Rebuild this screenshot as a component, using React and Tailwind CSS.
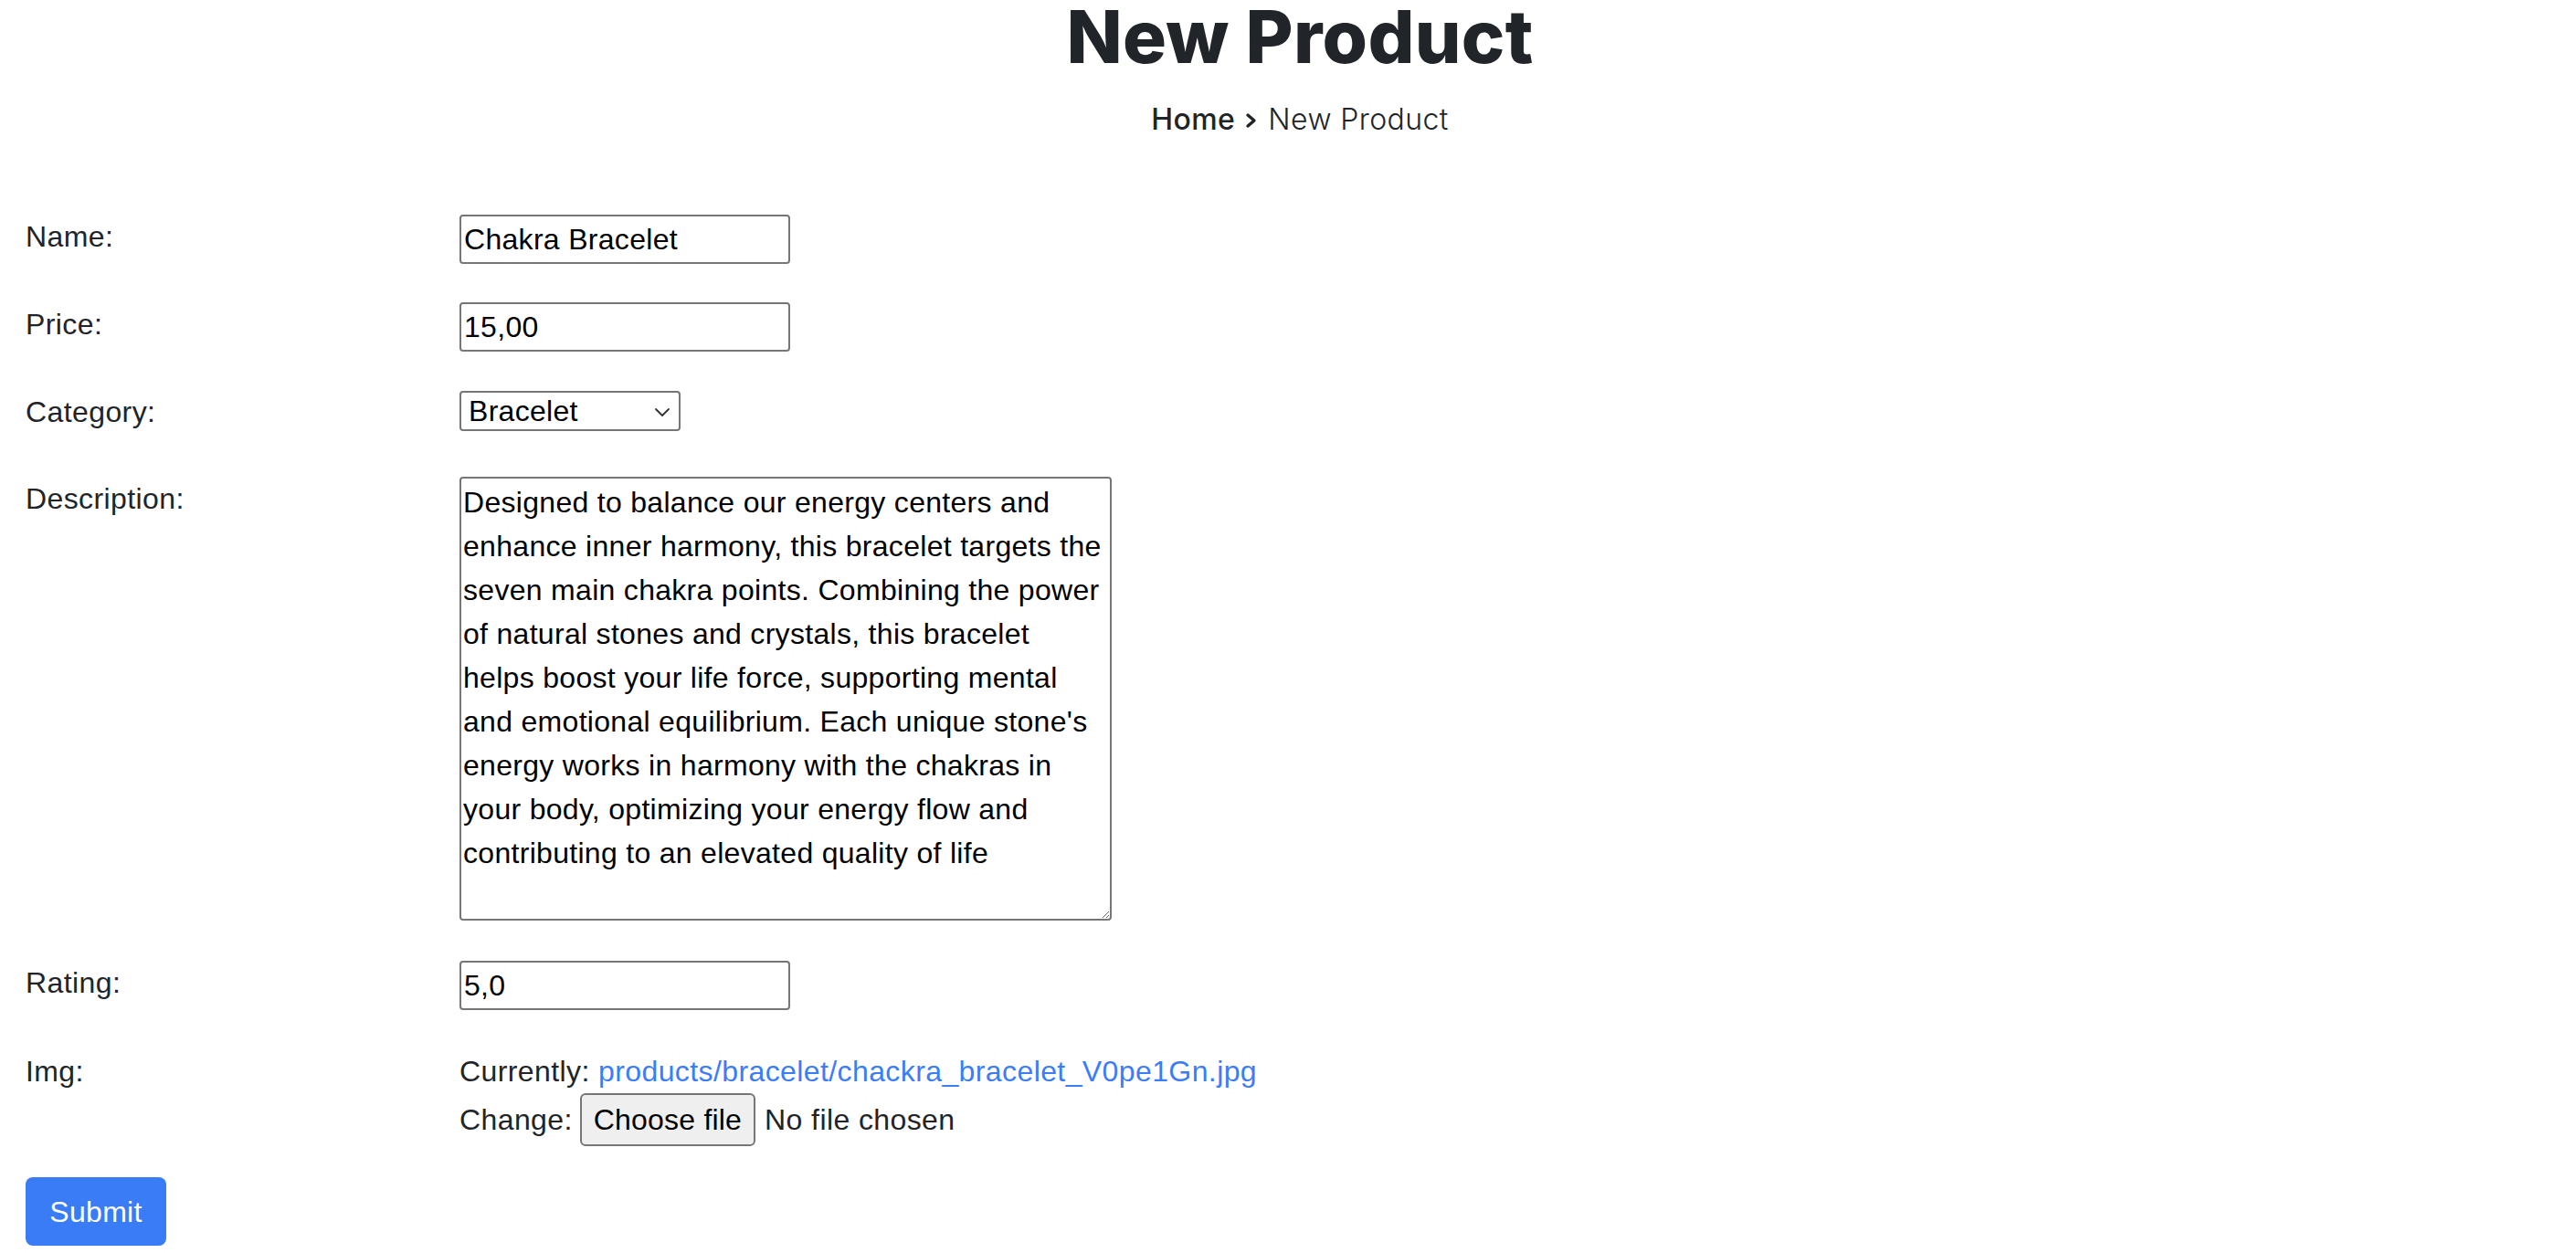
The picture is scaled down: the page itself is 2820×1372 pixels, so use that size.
import React from "react";

const desc =
  "Designed to balance our energy centers and\nenhance inner harmony, this bracelet targets the\nseven main chakra points. Combining the power\nof natural stones and crystals, this bracelet\nhelps boost your life force, supporting mental\nand emotional equilibrium. Each unique stone's\nenergy works in harmony with the chakras in\nyour body, optimizing your energy flow and\ncontributing to an elevated quality of life";

function Label({ children }) {
  return (
    <div className="w-[475px] shrink-0 text-[32px] leading-[48px] tracking-[0.4px] text-[#212529]">
      {children}
    </div>
  );
}

function TextInput({ value }) {
  return (
    <input
      type="text"
      defaultValue={value}
      className="w-[362px] h-[54px] border-2 border-[#767676] rounded-[4px] px-[3px] text-[32px] leading-[48px] tracking-[0.3px] text-black bg-white outline-none font-['Liberation_Sans',Arial,sans-serif]"
    />
  );
}

export default function App() {
  return (
    <div className="min-h-screen w-full bg-white text-[#212529] font-['Liberation_Sans',Arial,sans-serif]">
      <div className="pl-[26px] text-center">
        <h1 className="font-['Inter',sans-serif] font-extrabold text-[80px] leading-[80px] tracking-[0.3px] text-[#212529]">
          New Product
        </h1>
        <div className="mt-[27px] flex justify-center items-center font-['Inter',sans-serif] text-[32px] leading-[48px] text-[#212529]">
          <span className="font-medium tracking-[0.4px]">Home</span>
          <svg
            width="16"
            height="18"
            viewBox="0 0 16 18"
            className="mx-[10px] mt-[2px]"
          >
            <polyline
              points="4,3 11,9 4,15"
              fill="none"
              stroke="#212529"
              strokeWidth="3.4"
              strokeLinecap="round"
              strokeLinejoin="round"
            />
          </svg>
          <span className="font-light tracking-[0.4px]">New Product</span>
        </div>
      </div>

      <form className="px-[28px] mt-[80px]" onSubmit={(e) => e.preventDefault()}>
        <div className="flex h-[96px]">
          <Label>Name:</Label>
          <TextInput value="Chakra Bracelet" />
        </div>
        <div className="flex h-[96px]">
          <Label>Price:</Label>
          <TextInput value="15,00" />
        </div>
        <div className="flex h-[95px]">
          <Label>Category:</Label>
          <div className="relative mt-[1px] w-[242px] h-[44px]">
            <select
              defaultValue="Bracelet"
              className="appearance-none w-[242px] h-[44px] border-2 border-[#767676] rounded-[4px] pl-[8px] pr-[30px] text-[32px] leading-[38px] tracking-[0.3px] text-black bg-white outline-none font-['Liberation_Sans',Arial,sans-serif]"
            >
              <option>Bracelet</option>
              <option>Necklace</option>
              <option>Ring</option>
            </select>
            <svg
              width="18"
              height="12"
              viewBox="0 0 18 12"
              className="absolute right-[11px] top-[17px] pointer-events-none"
            >
              <polyline
                points="2,3 9,10 16,3"
                fill="none"
                stroke="#333"
                strokeWidth="1.8"
                strokeLinecap="round"
                strokeLinejoin="round"
              />
            </svg>
          </div>
        </div>
        <div className="flex h-[530px]">
          <Label>Description:</Label>
          <textarea
            defaultValue={desc}
            className="w-[714px] h-[486px] border-2 border-[#767676] rounded-[4px] px-[2px] py-[2px] text-[32px] leading-[48px] tracking-[0.3px] text-black bg-white outline-none resize-y whitespace-pre-wrap font-['Liberation_Sans',Arial,sans-serif]"
          />
        </div>
        <div className="flex h-[97px]">
          <Label>Rating:</Label>
          <TextInput value="5,0" />
        </div>
        <div className="flex">
          <Label>Img:</Label>
          <div className="flex flex-col text-[32px] tracking-[0.4px] text-[#212529]">
            <div className="leading-[48px]">
              Currently:{" "}
              <a href="#" className="text-[#3b7df6]">
                products/bracelet/chackra_bracelet_V0pe1Gn.jpg
              </a>
            </div>
            <div className="flex items-center h-[58px]">
              <span className="leading-[48px]">Change:</span>
              <button
                type="button"
                className="ml-[8px] h-[58px] px-[13px] border-2 border-[#767676] bg-[#efefef] rounded-[6px] text-[32px] leading-none tracking-[0.2px] text-black font-['Liberation_Sans',Arial,sans-serif]"
              >
                Choose file
              </button>
              <span className="ml-[10px] leading-[48px]">No file chosen</span>
            </div>
          </div>
        </div>
        <button
          type="submit"
          className="mt-[34px] w-[154px] h-[75px] rounded-[8px] bg-[#3a7bf6] text-white text-[32px] leading-none tracking-[0.3px] font-['Liberation_Sans',Arial,sans-serif]"
        >
          Submit
        </button>
      </form>
    </div>
  );
}
